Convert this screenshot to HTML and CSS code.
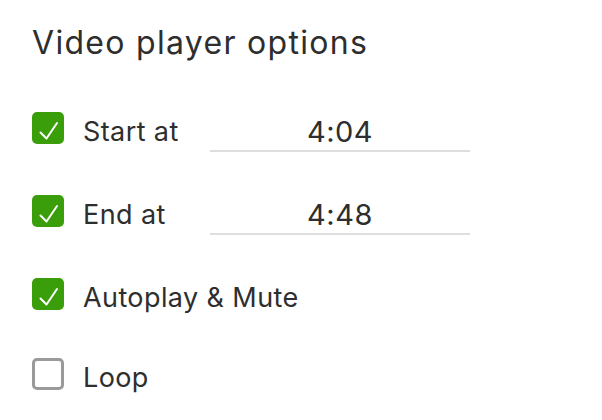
FILE: index.html
```html
<!DOCTYPE html>
<html lang="en">
<head>
    <meta charset="UTF-8">
    <title>Video player options</title>
    <link rel="stylesheet" href="styles.css">
</head>
<body>
    <div class="panel">
        <h1>Video player options</h1>

        <div class="option timed">
            <span class="box checked">
                <svg viewBox="0 0 32 32"><path d="M8.5 20.5l6 6 10.5-15.5"/></svg>
            </span>
            <span class="label">Start at</span>
            <input class="time" type="text" value="4:04">
        </div>

        <div class="option timed">
            <span class="box checked">
                <svg viewBox="0 0 32 32"><path d="M8.5 20.5l6 6 10.5-15.5"/></svg>
            </span>
            <span class="label">End at</span>
            <input class="time" type="text" value="4:48">
        </div>

        <div class="option">
            <span class="box checked">
                <svg viewBox="0 0 32 32"><path d="M8.5 20.5l6 6 10.5-15.5"/></svg>
            </span>
            <span class="label">Autoplay &amp; Mute</span>
        </div>

        <div class="option">
            <span class="box"></span>
            <span class="label">Loop</span>
        </div>
    </div>
</body>
</html>
```

FILE: styles.css
```css
/* page */
body {
    margin: 0;
    background: #ffffff;
    color: #2e2e2e;
    font-family: 'Inter', 'Noto Sans', sans-serif;
}

.panel {
    padding: 23px 32px 0;
}

h1 {
    font-size: 32px;
    font-weight: 400;
    letter-spacing: 1.3px;
    line-height: 40px;
    margin: 0 0 49px;
}

/* rows */
.option {
    display: flex;
    align-items: flex-start;
    height: 32px;
    margin-bottom: 48px;
}

.option.timed {
    margin-bottom: 51px;
}

.box {
    width: 32px;
    height: 32px;
    box-sizing: border-box;
    border-radius: 5px;
    border: 3px solid #9a9a9a;
    flex-shrink: 0;
}

.box.checked {
    background: #3a9e0a;
    border: none;
}

.box svg {
    width: 32px;
    height: 32px;
    display: block;
}

.box svg path {
    fill: none;
    stroke: #ffffff;
    stroke-width: 2;
    stroke-linecap: round;
    stroke-linejoin: round;
}

.label {
    font-size: 27px;
    line-height: 32px;
    letter-spacing: 0.4px;
    margin: 4px 0 0 19px;
    width: 127px;
    white-space: nowrap;
}

.time {
    width: 260px;
    height: 36px;
    line-height: 36px;
    margin-top: 2px;
    padding: 0;
    border: none;
    border-bottom: 2px solid #dedede;
    font-family: inherit;
    font-size: 29px;
    letter-spacing: 0.5px;
    color: #2e2e2e;
    background: transparent;
    text-align: center;
    outline: none;
}
```
